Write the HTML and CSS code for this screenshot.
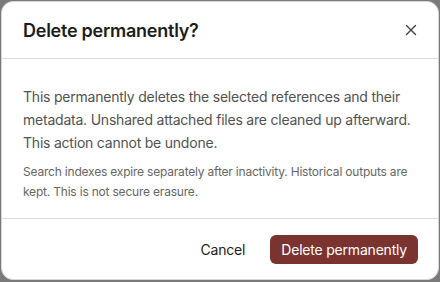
FILE: index.html
```html
<!DOCTYPE html>
<html lang="en">
<head>
<meta charset="utf-8">
<title>Delete permanently?</title>
<link rel="stylesheet" href="styles.css">
</head>
<body>
<div class="dialog" role="dialog" aria-labelledby="dlg-title">
  <div class="dialog-header">
    <h2 id="dlg-title" class="dialog-title">Delete permanently?</h2>
    <button class="close-btn" aria-label="Close">
      <svg width="12" height="12" viewBox="0 0 12 12" aria-hidden="true"><path d="M1.5 1.5l9 9M10.5 1.5l-9 9" stroke="#444" stroke-width="1.4" stroke-linecap="round" fill="none"/></svg>
    </button>
  </div>
  <div class="dialog-body">
    <p class="lead">This permanently deletes the selected references and their metadata. Unshared attached files are cleaned up afterward. This action cannot be undone.</p>
    <p class="note">Search indexes expire separately after inactivity. Historical outputs are kept. This is not secure erasure.</p>
  </div>
  <div class="dialog-footer">
    <button class="btn btn-ghost">Cancel</button>
    <button class="btn btn-danger">Delete permanently</button>
  </div>
</div>
</body>
</html>
```
FILE: styles.css
```css
html, body {
  margin: 0;
  padding: 0;
}
body {
  background: #7a7a7a;
  font-family: Inter, "Noto Sans", sans-serif;
  width: 440px;
  height: 282px;
  overflow: hidden;
}
.dialog {
  margin: 1px 0 0 1px;
  width: 436px;
  height: 277px;
  background: #fff;
  border: 1px solid #d6d6d6;
  border-radius: 12px;
  display: flex;
  flex-direction: column;
  overflow: hidden;
}
.dialog-header {
  display: flex;
  align-items: center;
  justify-content: space-between;
  height: 56px;
  padding: 0 22px 0 21px;
  border-bottom: 1px solid #dedede;
}
.dialog-title {
  margin: 0;
  font-size: 18px;
  font-weight: 600;
  color: #1c1c1c;
  letter-spacing: -0.25px;
}
.close-btn {
  border: 0;
  background: transparent;
  padding: 0;
  width: 12px;
  height: 12px;
  display: flex;
  margin-right: -1px;
}
.dialog-body {
  flex: 1;
  padding: 26px 21px 0 21px;
  border-bottom: 1px solid #dedede;
}
.lead {
  margin: 0;
  font-size: 14px;
  line-height: 23px;
  color: #525252;
  letter-spacing: -0.22px;
}
.note {
  margin: 8px 0 0;
  font-size: 12px;
  line-height: 20px;
  color: #666;
  letter-spacing: -0.2px;
}
.dialog-footer {
  display: flex;
  justify-content: flex-end;
  align-items: center;
  gap: 23px;
  height: 60px;
  padding: 0 20px;
}
.btn {
  font-family: inherit;
  font-size: 14px;
  border: 0;
  cursor: pointer;
  letter-spacing: -0.2px;
}
.btn-ghost {
  background: transparent;
  color: #222;
  padding: 6px 2px;
}
.btn-danger {
  background: #7b3330;
  color: #fff;
  height: 29px;
  padding: 0 11px;
  border-radius: 6px;
}
```
